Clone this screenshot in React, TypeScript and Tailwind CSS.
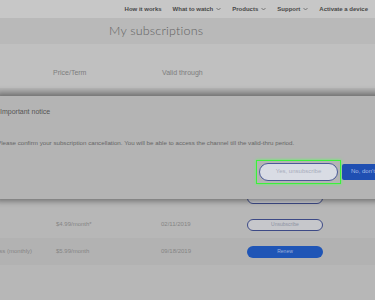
import React from 'react'

const navItems = [
  { label: 'How it works', drop: false },
  { label: 'What to watch', drop: true },
  { label: 'Products', drop: true },
  { label: 'Support', drop: true },
  { label: 'Activate a device', drop: false },
]

function Chevron() {
  return (
    <svg width="5" height="4" viewBox="0 0 10 6" className="ml-[3px]">
      <path d="M1 1l4 4 4-4" fill="none" stroke="#555" strokeWidth="1.4" />
    </svg>
  )
}

type Row = { name: string; price: string; date: string; action: 'outline' | 'solid'; label: string; dark?: boolean }

const rows: Row[] = [
  { name: '', price: '', date: '', action: 'outline', label: 'Unsubscribe' },
  { name: '', price: '$4.99/month*', date: '02/11/2019', action: 'outline', label: 'Unsubscribe' },
  { name: 'Pass (monthly)', price: '$5.99/month', date: '09/18/2019', action: 'solid', label: 'Renew', dark: true },
]

export default function App() {
  return (
    <div className="relative w-[375px] h-[300px] overflow-hidden bg-[#b7b7b7]" style={{ fontFamily: '"Liberation Sans", Arial, sans-serif' }}>
      <div className="h-[18px] bg-[#c7c7c7] flex items-center justify-end gap-[11px] pr-[7px] text-[6px] font-bold text-[#474747]">
        {navItems.map(n => (
          <span key={n.label} className="flex items-center whitespace-nowrap">
            {n.label}
            {n.drop && <Chevron />}
          </span>
        ))}
      </div>

      <div className="h-[26px] bg-[#b9b9b9] pl-[109px] flex items-center">
        <span className="text-[12.5px] font-light text-[#626262] tracking-[0.2px]" style={{ fontFamily: 'Lato, sans-serif' }}>My subscriptions</span>
      </div>

      <div className="h-[44px] bg-[#c0c0c0] flex items-start pt-[24px] text-[7px] text-[#7d7d7d]">
        <span className="ml-[53px] w-[109px]">Price/Term</span>
        <span>Valid through</span>
      </div>

      <div className="h-[96px]" />

      {rows.map((r, i) => (
        <div key={i} className={`h-[27px] flex items-center text-[6px] text-[#858585] ${r.dark ? 'bg-[#b2b2b2]' : ''}`}>
          <span className="w-[56px] whitespace-nowrap overflow-hidden flex justify-end pr-[24px]">{r.name}</span>
          <span className="w-[105px]">{r.price}</span>
          <span className="w-[86px]">{r.date}</span>
          {r.action === 'outline' ? (
            <span className="w-[76px] h-[12px] rounded-full border border-[#3d4a86] bg-[#c6c7cb] flex items-center justify-center text-[5px] text-[#8d92a2]">{r.label}</span>
          ) : (
            <span className="w-[76px] h-[12px] rounded-full bg-[#1f55b6] flex items-center justify-center text-[5px] text-[#9fb3dc]">{r.label}</span>
          )}
        </div>
      ))}

      <div className="absolute top-[96px] left-[-4px] right-[-60px] h-[103px] bg-[#b4b4b4] shadow-[0_-4px_6px_rgba(0,0,0,0.35),0_3px_5px_rgba(0,0,0,0.3)] pl-[4px]">
        <div className="pt-[11px] text-[7px] text-[#555]">Important notice</div>
        <div className="mt-[20px] ml-[-3px] text-[6.2px] text-[#666] whitespace-nowrap">
          Please confirm your subscription cancellation. You will be able to access the channel till the valid-thru period.
        </div>
        <div className="mt-[13px] flex items-center">
          <div className="ml-[256px] p-[2px] border-[1.5px] border-[#3cf03c] shadow-[0_0_3px_#5fff5f] bg-[#b4b4b4]">
            <div className="w-[79px] h-[18px] rounded-full border border-[#4a5a98] bg-[#d9dce4] flex items-center justify-center text-[6px] text-[#a8acbc]">Yes, unsubscribe</div>
          </div>
          <div className="ml-[1px] w-[60px] h-[16px] bg-[#1f4fb2] rounded-[2px] flex items-center pl-[9px] text-[6px] text-[#a9bde8]">No, don't</div>
        </div>
      </div>
    </div>
  )
}
